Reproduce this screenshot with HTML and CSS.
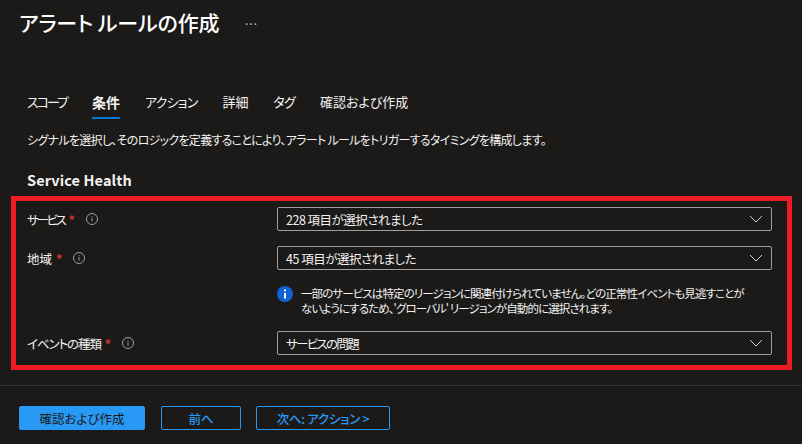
FILE: index.html
```html
<!DOCTYPE html>
<html lang="ja">
<head>
<meta charset="UTF-8" />
<title>アラート ルールの作成</title>
<link rel="stylesheet" href="styles.css">
</head>
<body>
<header class="page-header">
  <h1>アラート ルールの作成</h1>
  <span class="more">...</span>
</header>
<nav class="tabs">
  <a class="tab tight-2">スコープ</a>
  <a class="tab active">条件</a>
  <a class="tab tight-1">アクション</a>
  <a class="tab">詳細</a>
  <a class="tab tight-1">タグ</a>
  <a class="tab">確認および作成</a>
</nav>
<p class="desc">シグナルを選択し、そのロジックを定義することにより、アラート ルールをトリガーするタイミングを構成します。</p>
<h2>Service Health</h2>
<section class="highlight">
  <div class="row">
    <div class="row-label"><span class="tight-3">サービス</span><span class="req">*</span><svg class="hint" viewBox="0 0 12 12"><circle cx="6" cy="6" r="5.5"/><path d="M6 5.2v3.4M6 3.2v1"/></svg></div>
    <div class="select"><span class="tight-half">228 項目が選択されました</span><svg class="chev" viewBox="0 0 14 8"><path d="M1 1l6 6 6-6"/></svg></div>
  </div>
  <div class="row">
    <div class="row-label"><span>地域</span><span class="req">*</span><svg class="hint" viewBox="0 0 12 12"><circle cx="6" cy="6" r="5.5"/><path d="M6 5.2v3.4M6 3.2v1"/></svg></div>
    <div class="select"><span class="tight-half">45 項目が選択されました</span><svg class="chev" viewBox="0 0 14 8"><path d="M1 1l6 6 6-6"/></svg></div>
  </div>
  <div class="row note-row">
    <div class="row-label"></div>
    <div class="note">
      <svg class="note-icon" viewBox="0 0 16 16"><circle cx="8" cy="8" r="8"/><path d="M8 7v5.5M8 3.4v1.8"/></svg>
      <p>一部のサービスは特定のリージョンに関連付けられていません。どの正常性イベントも見逃すことが<br>ないようにするため、'グローバル' リージョンが自動的に選択されます。</p>
    </div>
  </div>
  <div class="row">
    <div class="row-label"><span class="tight-1">イベントの種類</span><span class="req">*</span><svg class="hint" viewBox="0 0 12 12"><circle cx="6" cy="6" r="5.5"/><path d="M6 5.2v3.4M6 3.2v1"/></svg></div>
    <div class="select"><span class="tight-2">サービスの問題</span><svg class="chev" viewBox="0 0 14 8"><path d="M1 1l6 6 6-6"/></svg></div>
  </div>
</section>
<footer class="actions">
  <button class="primary">確認および作成</button>
  <button class="secondary prev">前へ</button>
  <button class="secondary next">次へ: アクション &gt;</button>
</footer>
</body>
</html>
```
FILE: styles.css
```css
body {
  margin: 0;
  height: 444px;
  overflow: hidden;
  background-color: #1b1a19;
  color: #f3f2f1;
  font-family: "Noto Sans CJK JP", "Noto Sans", sans-serif;
  font-size: 12.5px;
  font-feature-settings: "palt";
}
.tight-half {
  letter-spacing: -0.5px;
}
.tight-1 {
  letter-spacing: -1.1px;
}
.tight-2 {
  letter-spacing: -1.7px;
}
.tight-3 {
  letter-spacing: -2.3px;
}
.page-header {
  display: flex;
  align-items: center;
  height: 44px;
  padding-left: 19px;
}
h1 {
  margin: 0;
  font-size: 21px;
  font-weight: 500;
  letter-spacing: -0.1px;
  color: #fff;
  width: 226px;
}
.more {
  font-size: 12px;
  letter-spacing: 1px;
  color: #c8c6c4;
  margin-top: -6px;
}
.tabs {
  display: flex;
  gap: 25px;
  margin: 47px 0 0 27px;
  height: 28px;
  font-size: 13px;
}
.tab {
  display: block;
  height: 26px;
  line-height: 22px;
}
.tab.tight-2 {
  letter-spacing: -2px;
}
.tab.tight-1 {
  letter-spacing: -0.8px;
}
.tab.active {
  font-size: 14px;
  font-weight: 700;
  border-bottom: 2px solid #0078d4;
}
.desc {
  margin: 11px 0 0 27px;
  font-size: 12px;
  line-height: 20px;
  letter-spacing: -0.7px;
}
h2 {
  margin: 20px 0 0 27px;
  font-size: 14.5px;
  line-height: 20px;
  font-weight: 700;
  letter-spacing: 0.1px;
}
.highlight {
  margin: 6px 10px 0 11px;
  border: 5px solid #ed1c24;
  padding: 6px 15px 10px 11px;
  height: 174px;
  box-sizing: border-box;
}
.row {
  display: flex;
  align-items: center;
  height: 24px;
  margin-bottom: 15px;
}
.row:last-child {
  margin-bottom: 0;
}
.row-label {
  width: 250px;
  flex: none;
  display: flex;
  align-items: center;
}
.req {
  color: #d13438;
  margin-left: 4px;
  font-weight: 700;
}
.hint {
  width: 12px;
  height: 12px;
  margin-left: 11px;
  fill: none;
  stroke: #a19f9d;
  stroke-width: 1;
}
.select {
  flex: 1;
  height: 24px;
  box-sizing: border-box;
  border: 1px solid #a19f9d;
  border-radius: 2px;
  padding: 0 8px;
  display: flex;
  align-items: center;
  justify-content: space-between;
}
.chev {
  width: 14px;
  height: 8px;
  fill: none;
  stroke: #d2d0ce;
  stroke-width: 1;
}
.note-row {
  height: 46px;
  margin-bottom: 0;
  align-items: flex-start;
}
.note {
  flex: 1;
  display: flex;
  gap: 8px;
  padding-top: 1px;
}
.note-icon {
  width: 16px;
  height: 16px;
  flex: none;
  fill: #0f62d6;
  stroke: #fff;
  stroke-width: 2;
}
.note-icon circle {
  stroke: none;
}
.note p {
  margin: 0;
  font-size: 11.5px;
  line-height: 15px;
  letter-spacing: -0.9px;
  white-space: nowrap;
}
.actions {
  margin-top: 15px;
  border-top: 1px solid #323130;
  padding: 20px 0 0 19px;
  display: flex;
  gap: 15px;
}
button {
  height: 24px;
  box-sizing: border-box;
  border-radius: 2px;
  font-family: inherit;
  font-size: 12.5px;
  font-feature-settings: inherit;
  font-weight: 500;
  padding: 0;
}
.primary {
  width: 126px;
  margin-right: 1px;
  background-color: #2899f5;
  border: 1px solid #2899f5;
  color: #1b1a19;
  font-weight: 400;
}
.secondary {
  background-color: transparent;
  border: 1px solid #2899f5;
  color: #2899f5;
}
.prev {
  width: 80px;
}
.next {
  width: 134px;
  letter-spacing: -0.3px;
}
```
